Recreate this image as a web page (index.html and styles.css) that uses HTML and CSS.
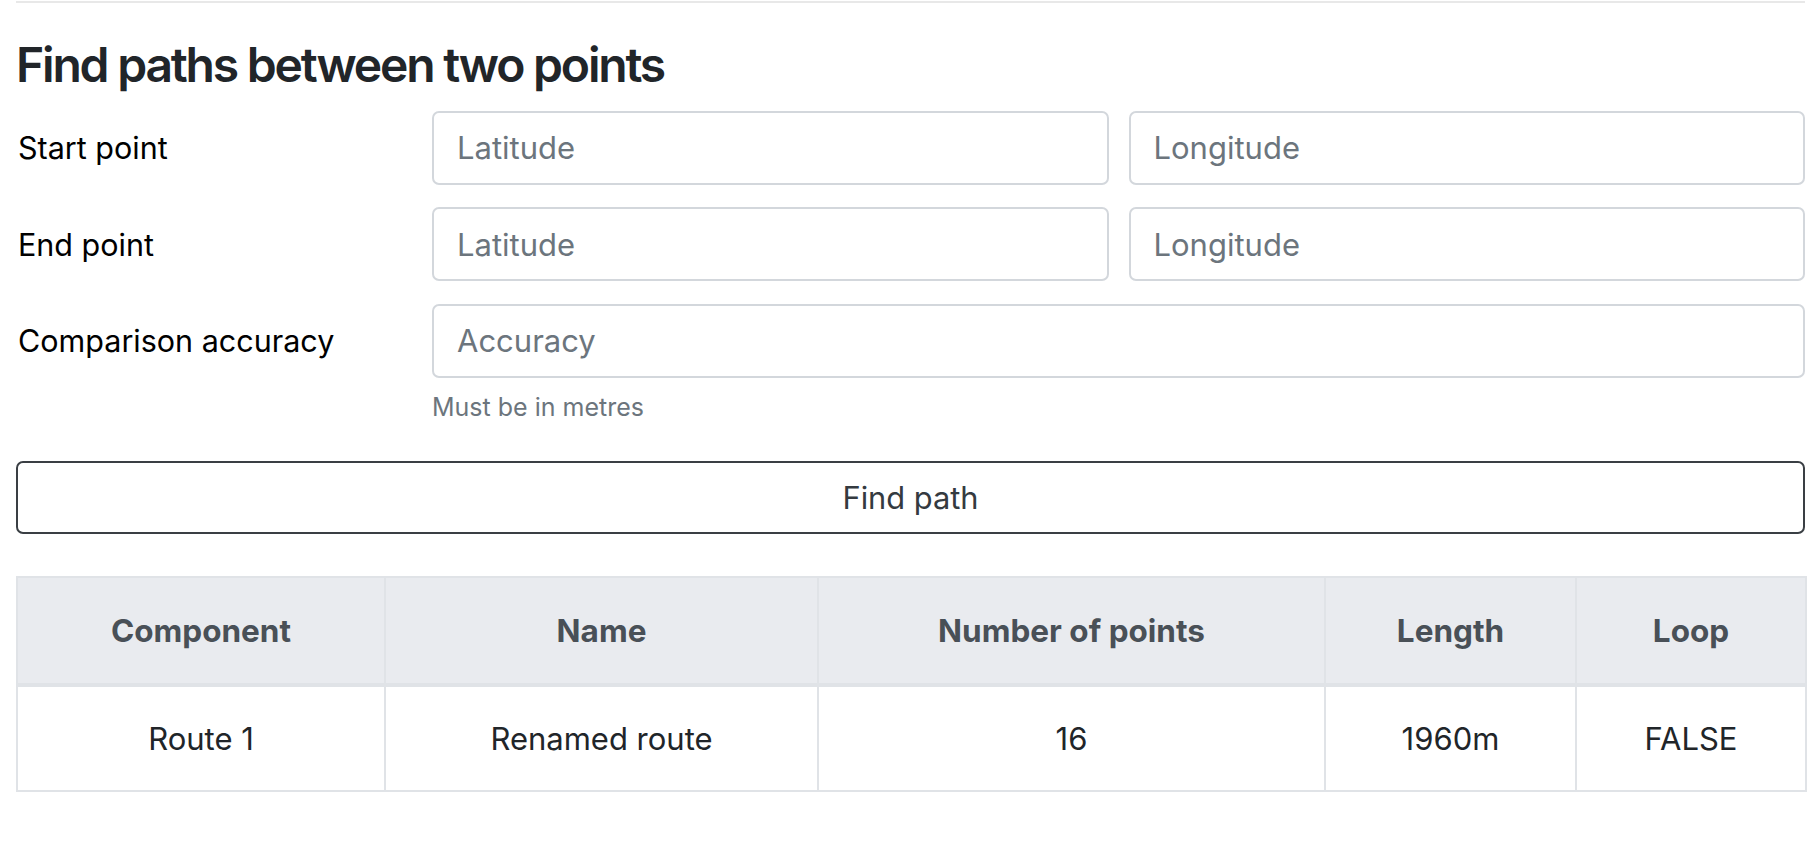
FILE: index.html
```html
<!DOCTYPE html>
<html lang="en">
<head>
<meta charset="utf-8">
<title>Find paths between two points</title>
<link rel="stylesheet" href="styles.css">
</head>
<body>
<div class="page">
  <hr class="rule">
  <h2 class="title">Find paths between two points</h2>
  <form class="path-form">
    <div class="field">
      <label class="field-label">Start point</label>
      <div class="pair">
        <input class="input" type="text" placeholder="Latitude">
        <input class="input" type="text" placeholder="Longitude">
      </div>
    </div>
    <div class="field">
      <label class="field-label">End point</label>
      <div class="pair">
        <input class="input" type="text" placeholder="Latitude">
        <input class="input" type="text" placeholder="Longitude">
      </div>
    </div>
    <div class="field field-last">
      <label class="field-label">Comparison accuracy</label>
      <div class="control">
        <input class="input" type="text" placeholder="Accuracy">
        <small class="help">Must be in metres</small>
      </div>
    </div>
    <button class="btn" type="button">Find path</button>
  </form>
  <table class="results">
    <colgroup>
      <col class="c1"><col class="c2"><col class="c3"><col class="c4"><col class="c5">
    </colgroup>
    <thead>
      <tr><th>Component</th><th>Name</th><th>Number of points</th><th>Length</th><th>Loop</th></tr>
    </thead>
    <tbody>
      <tr><td>Route 1</td><td>Renamed route</td><td>16</td><td>1960m</td><td>FALSE</td></tr>
    </tbody>
  </table>
</div>
</body>
</html>
```
FILE: styles.css
```css
* { box-sizing: border-box; }
html, body { margin: 0; background: #fff; }
body {
  font-family: Inter, "Liberation Sans", sans-serif;
  color: #212529;
}
.page { padding: 0 15px 0 16px; }
.rule {
  margin: 1px 0 0;
  border: 0;
  height: 2px;
  background: #e8e8e8;
}
.title {
  margin: 33px 0 17px;
  font-size: 48px;
  line-height: 57.6px;
  font-weight: 600;
  color: #212529;
  letter-spacing: -2.2px;
}
.path-form { margin: 0; }
.field {
  display: grid;
  grid-template-columns: 416px 1fr;
  align-items: start;
  margin-bottom: 22.5px;
}
.field-last { margin-bottom: 0; }
.field-label {
  height: 74px;
  display: flex;
  align-items: center;
  padding-left: 2px;
  font-size: 30.5px;
  color: #000;
}
.pair {
  display: grid;
  grid-template-columns: 1fr 1fr;
  gap: 20px;
}
.control { display: flex; flex-direction: column; }
.input {
  display: block;
  width: 100%;
  height: 74px;
  border: 2px solid #d3d7dc;
  border-radius: 7px;
  padding: 0 23px;
  font-family: Inter, "Liberation Sans", sans-serif;
  font-size: 31px;
  color: #495057;
  background: #fff;
}
.input::placeholder { color: #6c757d; opacity: 1; }
.help {
  margin-top: 11px;
  font-size: 25px;
  line-height: 36px;
  color: #6c757d;
}
.btn {
  display: block;
  width: 100%;
  height: 73px;
  margin-top: 36px;
  border: 2px solid #3a3f44;
  border-radius: 7px;
  background: #fff;
  font-family: Inter, "Liberation Sans", sans-serif;
  font-size: 30.8px;
  color: #343a40;
}
.results {
  width: 100%;
  margin-top: 42px;
  border-collapse: collapse;
  table-layout: fixed;
  font-size: 31px;
}
.c1 { width: 368px; }
.c2 { width: 433px; }
.c3 { width: 507px; }
.c4 { width: 251px; }
.c5 { width: 230px; }
.results th, .results td {
  border: 2px solid #e0e3e7;
  text-align: center;
  vertical-align: middle;
  padding: 0;
}
.results th {
  height: 108px;
  background: #e9ebef;
  color: #495057;
  font-weight: 700;
  font-size: 31.5px;
  border-bottom-width: 4px;
}
.results td {
  height: 106px;
  color: #212529;
}
```
